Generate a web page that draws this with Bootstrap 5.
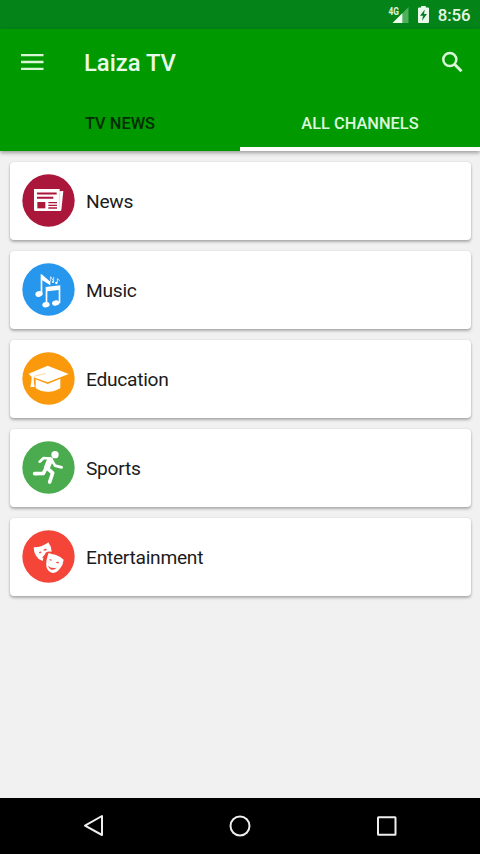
<!DOCTYPE html>
<html lang="en">
<head>
<meta charset="utf-8">
<meta name="viewport" content="width=device-width, initial-scale=1">
<title>Laiza TV</title>
<link href="https://cdn.jsdelivr.net/npm/bootstrap@5.3.0/dist/css/bootstrap.min.css" rel="stylesheet">
<style>
body{font-family:Roboto,sans-serif;background:#f1f1f1;color:#1b1b1b}
svg{display:block;flex:none}
.screen{height:854px;overflow:hidden}
.status{height:29px;background:#038318;padding:0 9.5px 0 0}
.clock{font-size:16.8px;font-weight:500;line-height:29px;color:#e6f7e6;margin-left:7px;letter-spacing:-.1px;padding-top:1px}
.app-header{background:#009a00;box-shadow:0 2px 4px rgba(0,0,0,.35);z-index:1;height:122px}
.toolbar{height:67px;padding:0 17.5px 0 21px}
.app-title{font-size:23.8px;font-weight:500;color:#e9fbe9;margin-left:40px;line-height:67px;padding-top:1px}
.tab-strip{height:55px}
.tab-strip .nav-link{height:55px;padding:0;line-height:55px;font-size:16.4px;font-weight:500;color:#032c03;border-radius:0}
.tab-strip .nav-link.active{color:#dcf8dc;border-bottom:4px solid #fff}
.channels{padding:11px 9.5px 0;gap:11px}
.channel{height:78px;border:0;border-radius:4px;padding:0 12.5px;box-shadow:0 2px 3px rgba(0,0,0,.28),0 0 2px rgba(0,0,0,.12)}
.channel svg{margin-bottom:1px}
.channel-name{font-size:19.2px;letter-spacing:-.28px;margin-left:11px;line-height:24px;padding-top:1px}
.sysnav{height:56px;background:#000}
</style>
<script src="https://cdn.jsdelivr.net/npm/bootstrap@5.3.0/dist/js/bootstrap.bundle.min.js"></script>
</head>
<body>
<div class="screen d-flex flex-column">
  <div class="status d-flex justify-content-end">
    <svg width="43" height="29" viewBox="0 0 43 29">
      <text x="0.5" y="14.5" font-family="Roboto, sans-serif" font-size="10" font-weight="700" fill="#e0f5e0" textLength="10.5" lengthAdjust="spacingAndGlyphs">4G</text>
      <path d="M20.500 7v16H5z" fill="#4fb05c"/><path d="M14.300 13.300V23H4.500z" fill="#f0fbf0"/>
      <path d="M31 7.500h2.200V6h4.600v1.500H40q1 0 1 1V22q0 1-1 1h-9q-1 0-1-1V8.500q0-1 1-1z" fill="#eaf9ea"/>
      <path d="M36.800 9.500l-4.800 6.200h3l-1 5 5-6.600h-3z" fill="#087a2c"/>
    </svg>
    <span class="clock">8:56</span>
  </div>
  <header class="app-header position-relative">
    <div class="toolbar d-flex align-items-center">
      <svg width="23" height="19" viewBox="0 0 23 19"><path d="M0 2.200h22.500M0 9h22.500M0 15.800h22.500" stroke="#d9f7d6" stroke-width="2.300"/></svg>
      <h1 class="app-title mb-0">Laiza TV</h1>
      <svg class="ms-auto" width="22" height="24" viewBox="0 0 22 24" fill="none" stroke="#d9f7d6"><circle cx="8.800" cy="8.500" r="6.500" stroke-width="2.500"/><path d="M13.500 13.200l7 7" stroke-width="3"/></svg>
    </div>
    <nav class="tab-strip nav nav-fill row g-0">
      <a class="nav-link col-6" href="#">TV NEWS</a>
      <a class="nav-link col-6 active" href="#">ALL CHANNELS</a>
    </nav>
  </header>
  <main class="channels d-flex flex-column flex-grow-1">
    <div class="card channel flex-row align-items-center">
      <svg width="53" height="53" viewBox="36 28 159 159"><circle cx="115.500" cy="107.500" r="78.500" fill="#ab163b"/>
        <path d="M72 73h77v7l11-1-6 57q0 3-4 3H76q-4 0-4-4z" fill="#fff"/>
        <path d="M81 86.500h59M81 99h49" stroke="#ab163b" stroke-width="6"/>
        <path d="M115 114h26M115 122h26M115 130h26" stroke="#ab163b" stroke-width="4"/>
        <path d="M82 112h24v19H82z" fill="#ab163b"/><path d="M149 84l-1 44" stroke="#d68a9d" stroke-width="1"/></svg>
      <span class="channel-name">News</span>
    </div>
    <div class="card channel flex-row align-items-center">
      <svg width="53" height="53" viewBox="36 28 159 159"><circle cx="115.500" cy="107.500" r="78.500" fill="#2797ed"/>
        <g fill="#fff"><ellipse cx="87" cy="121" rx="11" ry="8.500" transform="rotate(-15 87 121)"/><path d="M92 62h3l26 22v11l-24-15v42h-5z"/>
        <ellipse cx="108" cy="153" rx="11" ry="8" transform="rotate(-12 108 153)"/><ellipse cx="137" cy="148" rx="11" ry="8" transform="rotate(-12 137 148)"/><path d="M107 100l44-5v54h-5v-40l-34 4v40h-5z"/></g>
        <g fill="none" stroke="#fff" stroke-width="2.200"><path d="M122 84V69l9 14V70M142 87V75l7 6"/></g><g fill="#fff"><circle cx="129" cy="85" r="3"/><circle cx="139" cy="88" r="3.500"/></g></svg>
      <span class="channel-name">Music</span>
    </div>
    <div class="card channel flex-row align-items-center">
      <svg width="53" height="53" viewBox="36 28 159 159"><circle cx="115.500" cy="107.500" r="78.500" fill="#fb990c"/>
        <path d="M113 69l63 25-63 25-42-15 1 15 2 14H61l3-16 1-14-9-10z" fill="#fff"/>
        <path d="M77 110l36 14 38-16v28q-17 12-38 11-23 0-36-11z" fill="#fff"/>
        <path d="M72 101q18-6 36-8" fill="none" stroke="#fb990c" stroke-width="1.200"/></svg>
      <span class="channel-name">Education</span>
    </div>
    <div class="card channel flex-row align-items-center">
      <svg width="53" height="53" viewBox="36 28 159 159"><circle cx="115.500" cy="107.500" r="78.500" fill="#4bac4f"/>
        <circle cx="135" cy="69" r="11" fill="#fff"/>
        <g fill="none" stroke="#fff" stroke-linecap="round" stroke-linejoin="round"><path d="M89 90l12-11 19 2" stroke-width="8"/><path d="M120 85l-9 22" stroke-width="18"/><path d="M127 88l8 14 20 5" stroke-width="8"/><path d="M109 108l-9 17-26 1" stroke-width="11"/><path d="M113 111l15 13-9 27" stroke-width="11"/></g></svg>
      <span class="channel-name">Sports</span>
    </div>
    <div class="card channel flex-row align-items-center">
      <svg width="53" height="53" viewBox="36 30 159 159"><circle cx="115.500" cy="109.500" r="78.500" fill="#f44538"/>
        <path d="M71 82q24 1 44-15 9 12 10 28-12-2-18 3-8 14-9 25-14-5-20-16-7-11-7-25z" fill="#fff"/>
        <path d="M87 98q4-5 7-1-3 3-7 1zM101 90q5-5 9-1-5 4-9 1zM98 114q2-8 8-9l-4 8z" fill="#f44538" stroke="#f44538" stroke-width="1.500"/>
        <path d="M116 99q8 3 20 5 17 6 25 15-1 15-12 28-9 12-22 12-14-5-18-19-2-20 7-41z" fill="#fff"/>
        <path d="M117 119q6-3 9 2-5 2-9-2zM137 127q7-4 11 2-7 2-11-2zM114 137q9 10 26 6-7 8-16 6-8-3-10-12z" fill="#f44538"/></svg>
      <span class="channel-name">Entertainment</span>
    </div>
  </main>
  <footer class="sysnav">
    <svg width="480" height="56" viewBox="0 0 480 56" fill="none" stroke="#eee" stroke-width="2" stroke-linejoin="round"><path d="M102 18v19L85 27.700z"/><circle cx="240" cy="28" r="9.500"/><rect x="378" y="19.300" width="17.500" height="17.500" rx=".5"/></svg>
  </footer>
</div>
</body>
</html>
